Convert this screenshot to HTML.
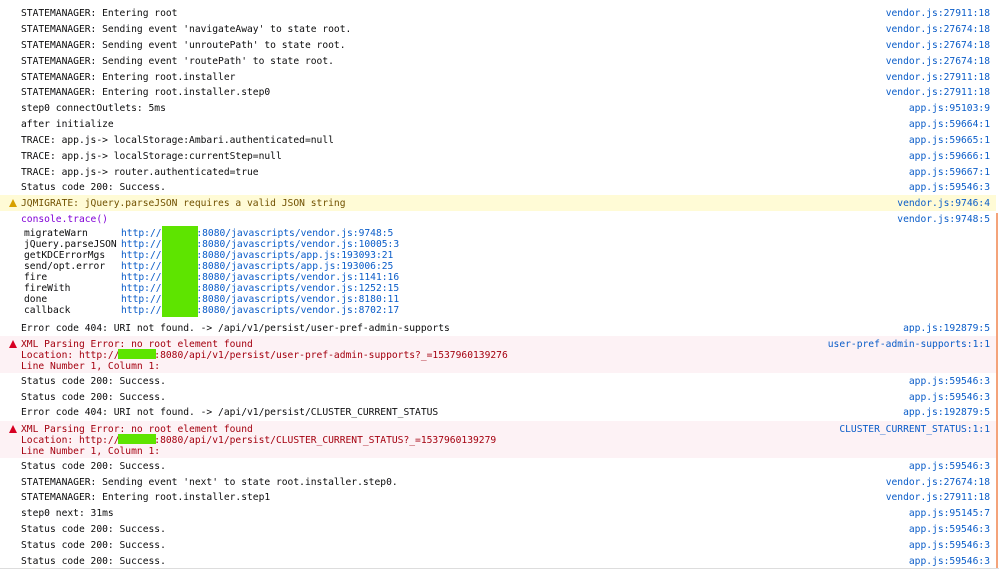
<!DOCTYPE html>
<html><head><style>
body{margin:0;width:999px;height:575px;background:#fff;position:relative;overflow:hidden;font-family:"DejaVu Sans Mono","Liberation Mono",monospace;font-size:9.65px;color:#0c0c0d}
.t{position:absolute;left:21px;height:12px;line-height:12px;white-space:pre;margin-top:1px}
.r{position:absolute;right:9px;height:12px;line-height:12px;color:#0a5cc8;white-space:pre;margin-top:1px}
.bg{position:absolute;left:0;width:996px}
.e{color:#a4000f}.w{color:#715100}
.g{position:absolute;background:#5ee400}
.b{color:#0a5cc8}
.ic{position:absolute;left:9px;width:0;height:0;border-left:4px solid transparent;border-right:4px solid transparent}
</style></head><body>
<div class="bg" style="top:195px;height:16px;background:#fffbd6"></div>
<div class="bg" style="top:336px;height:37px;background:#fdf2f5"></div>
<div class="bg" style="top:421px;height:37px;background:#fdf2f5"></div>
<div style="position:absolute;left:996px;top:213px;width:2px;height:355px;background:#f4a37a"></div>
<div style="position:absolute;left:0;top:568px;width:999px;height:1px;background:#ddd"></div>

<div class="t" style="top:7px">STATEMANAGER: Entering root</div><div class="r" style="top:7px">vendor.js:27911:18</div>
<div class="t" style="top:23px">STATEMANAGER: Sending event 'navigateAway' to state root.</div><div class="r" style="top:23px">vendor.js:27674:18</div>
<div class="t" style="top:39px">STATEMANAGER: Sending event 'unroutePath' to state root.</div><div class="r" style="top:39px">vendor.js:27674:18</div>
<div class="t" style="top:55px">STATEMANAGER: Sending event 'routePath' to state root.</div><div class="r" style="top:55px">vendor.js:27674:18</div>
<div class="t" style="top:71px">STATEMANAGER: Entering root.installer</div><div class="r" style="top:71px">vendor.js:27911:18</div>
<div class="t" style="top:86px">STATEMANAGER: Entering root.installer.step0</div><div class="r" style="top:86px">vendor.js:27911:18</div>
<div class="t" style="top:102px">step0 connectOutlets: 5ms</div><div class="r" style="top:102px">app.js:95103:9</div>
<div class="t" style="top:118px">after initialize</div><div class="r" style="top:118px">app.js:59664:1</div>
<div class="t" style="top:134px">TRACE: app.js-> localStorage:Ambari.authenticated=null</div><div class="r" style="top:134px">app.js:59665:1</div>
<div class="t" style="top:150px">TRACE: app.js-> localStorage:currentStep=null</div><div class="r" style="top:150px">app.js:59666:1</div>
<div class="t" style="top:166px">TRACE: app.js-> router.authenticated=true</div><div class="r" style="top:166px">app.js:59667:1</div>
<div class="t" style="top:181px">Status code 200: Success.</div><div class="r" style="top:181px">app.js:59546:3</div>

<div class="ic" style="top:199px;border-bottom:8px solid #d7a000"></div>
<div class="t w" style="top:197px">JQMIGRATE: jQuery.parseJSON requires a valid JSON string</div><div class="r" style="top:197px">vendor.js:9746:4</div>
<div class="t" style="top:213px;color:#8000d7">console.trace()</div><div class="r" style="top:213px">vendor.js:9748:5</div>

<div class="t" style="top:227px;left:24px;line-height:11px">migrateWarn
jQuery.parseJSON
getKDCErrorMgs
send/opt.error
fire
fireWith
done
callback</div>
<div class="t b" style="top:227px;left:121px;line-height:11px">http://      :8080/javascripts/vendor.js:9748:5
http://      :8080/javascripts/vendor.js:10005:3
http://      :8080/javascripts/app.js:193093:21
http://      :8080/javascripts/app.js:193006:25
http://      :8080/javascripts/vendor.js:1141:16
http://      :8080/javascripts/vendor.js:1252:15
http://      :8080/javascripts/vendor.js:8180:11
http://      :8080/javascripts/vendor.js:8702:17</div>
<div class="g" style="left:162px;top:226px;width:36px;height:91px"></div>

<div class="t" style="top:322px">Error code 404: URI not found. -&gt; /api/v1/persist/user-pref-admin-supports</div><div class="r" style="top:322px">app.js:192879:5</div>

<div class="ic" style="top:340px;border-bottom:8px solid #d70022"></div>
<div class="t e" style="top:338px;line-height:11px">XML Parsing Error: no root element found
Location: http://      :8080/api/v1/persist/user-pref-admin-supports?_=1537960139276
Line Number 1, Column 1:</div><div class="r" style="top:338px">user-pref-admin-supports:1:1</div>
<div class="g" style="left:118px;top:349px;width:38px;height:10px"></div>

<div class="t" style="top:375px">Status code 200: Success.</div><div class="r" style="top:375px">app.js:59546:3</div>
<div class="t" style="top:391px">Status code 200: Success.</div><div class="r" style="top:391px">app.js:59546:3</div>
<div class="t" style="top:406px">Error code 404: URI not found. -&gt; /api/v1/persist/CLUSTER_CURRENT_STATUS</div><div class="r" style="top:406px">app.js:192879:5</div>

<div class="ic" style="top:425px;border-bottom:8px solid #d70022"></div>
<div class="t e" style="top:423px;line-height:11px">XML Parsing Error: no root element found
Location: http://      :8080/api/v1/persist/CLUSTER_CURRENT_STATUS?_=1537960139279
Line Number 1, Column 1:</div><div class="r" style="top:423px">CLUSTER_CURRENT_STATUS:1:1</div>
<div class="g" style="left:118px;top:434px;width:38px;height:10px"></div>

<div class="t" style="top:460px">Status code 200: Success.</div><div class="r" style="top:460px">app.js:59546:3</div>
<div class="t" style="top:476px">STATEMANAGER: Sending event 'next' to state root.installer.step0.</div><div class="r" style="top:476px">vendor.js:27674:18</div>
<div class="t" style="top:491px">STATEMANAGER: Entering root.installer.step1</div><div class="r" style="top:491px">vendor.js:27911:18</div>
<div class="t" style="top:507px">step0 next: 31ms</div><div class="r" style="top:507px">app.js:95145:7</div>
<div class="t" style="top:523px">Status code 200: Success.</div><div class="r" style="top:523px">app.js:59546:3</div>
<div class="t" style="top:539px">Status code 200: Success.</div><div class="r" style="top:539px">app.js:59546:3</div>
<div class="t" style="top:555px">Status code 200: Success.</div><div class="r" style="top:555px">app.js:59546:3</div>
</body></html>
